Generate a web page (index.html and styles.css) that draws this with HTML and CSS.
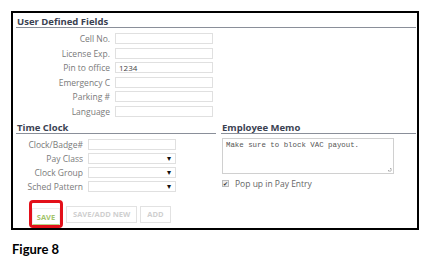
FILE: index.html
```html
<!DOCTYPE html>
<html lang="en">
<head>
<meta charset="UTF-8">
<title>Figure 8</title>
<link rel="stylesheet" href="styles.css">
</head>
<body>

<div class="panel">
  <h3 class="sec">User Defined Fields</h3>
  <div class="fields udf">
    <label>Cell No.</label><span class="inp"></span>
    <label>License Exp.</label><span class="inp"></span>
    <label>Pin to office</label><span class="inp">1234</span>
    <label>Emergency C</label><span class="inp"></span>
    <label>Parking #</label><span class="inp"></span>
    <label>Language</label><span class="inp"></span>
  </div>

  <div class="cols">
    <div class="col tc">
      <h3 class="sec">Time Clock</h3>
      <div class="fields clock">
        <label>Clock/Badge#</label><span class="inp"></span>
        <label>Pay Class</label><span class="inp sel"></span>
        <label>Clock Group</label><span class="inp sel"></span>
        <label>Sched Pattern</label><span class="inp sel"></span>
      </div>
    </div>
    <div class="col memo">
      <h3 class="sec">Employee Memo</h3>
      <div class="area">Make sure to block VAC payout.<span class="grip"></span></div>
      <div class="chk"><span class="box">✔</span>Pop up in Pay Entry</div>
    </div>
  </div>

  <div class="btns">
    <span class="hl"><button class="btn save">SAVE</button></span>
    <button class="btn">SAVE/ADD NEW</button>
    <button class="btn">ADD</button>
  </div>
</div>

<div class="fig">Figure 8</div>

</body>
</html>
```

FILE: styles.css
```css
*{margin:0;padding:0;box-sizing:border-box}
body{background:#fff;font-family:'Open Sans',sans-serif;color:#555}

/* ---------- panel ---------- */
.panel{margin:11px 0 0 11px;width:408px;height:219px;border:2px solid #000;padding:3px 1px 0 3px}
.sec{font-size:9.5px;font-weight:700;color:#3b4252;line-height:11px;border-bottom:1px solid #8a8f99;padding-left:1px}

.fields{display:grid;row-gap:3.6px;grid-auto-rows:11px;align-items:center;margin-top:5px}
.udf{grid-template-columns:94px 98px;column-gap:5px}
.clock{grid-template-columns:67px 88px;column-gap:5px;row-gap:3px}
.fields label{text-align:right;font-size:8.5px;color:#7a7a7a;line-height:11px}
.inp{height:11px;border:1px solid #e0e0e0;font-size:8px;line-height:9px;padding-left:3px;color:#444;position:relative}
.sel::after{content:"▾";position:absolute;right:4px;top:-1px;font-size:8px;color:#111}

/* ---------- columns ---------- */
.cols{display:flex;gap:5px;margin-top:5px}
.tc{width:200px}
.memo{flex:1}
.area{position:relative;margin:4px 22px 0 1px;height:36px;border:1px solid #d0d0d0;font-family:'Liberation Mono',monospace;font-size:7.4px;color:#555;padding:2px 3px}
.grip{position:absolute;right:1px;bottom:1px;width:5px;height:5px;background:linear-gradient(135deg,transparent 50%,#aaa 50%,transparent 65%,#aaa 75%,transparent 85%)}
.chk{display:flex;align-items:center;gap:6px;margin:4px 0 0 1px;font-size:8.5px;color:#666}
.box{width:7px;height:7px;border:1px solid #bbb;background:#eee;font-size:6px;line-height:6px;text-align:center;color:#333}

/* ---------- buttons ---------- */
.btns{display:flex;align-items:center;gap:3px;margin:8px 0 0 13px}
.hl{border:3px solid #e3101a;border-radius:4px;padding:0}
.btn{height:17px;padding:0 6px;border:1px solid #e2e2e2;background:#fff;font-family:'Open Sans',sans-serif;font-size:7.5px;font-weight:700;color:#cfcfcf}
.save{color:#a3c46c;border-color:#eee;border-bottom:1px solid #b9d48a;width:28px;padding:0}

/* ---------- caption ---------- */
.fig{margin:11px 0 0 12px;font-family:'Lato',sans-serif;font-weight:700;font-size:13px;color:#000}
```
